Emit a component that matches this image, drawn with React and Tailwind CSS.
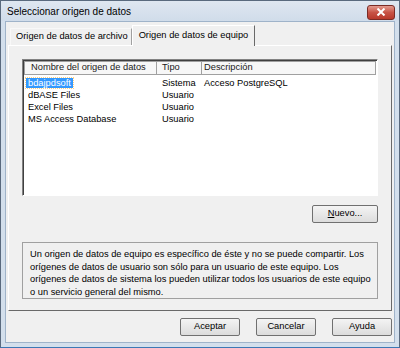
const font = { fontFamily: '"Liberation Sans", Arial, sans-serif' };

const rows = [
  { name: "bdajpdsoft", tipo: "Sistema", desc: "Acceso PostgreSQL", sel: true },
  { name: "dBASE Files", tipo: "Usuario", desc: "" },
  { name: "Excel Files", tipo: "Usuario", desc: "" },
  { name: "MS Access Database", tipo: "Usuario", desc: "" },
];

function Btn({ children, className = "" }) {
  return (
    <div
      className={
        "h-[18px] flex items-center justify-center bg-gradient-to-b from-[#f4f4f4] to-[#dcdcdc] border border-[#707070] rounded-[2px] text-[9.3px] text-black " +
        className
      }
    >
      {children}
    </div>
  );
}

export default function App() {
  return (
    <div
      style={font}
      className="w-[400px] h-[348px] flex flex-col bg-[#d3dfec] border border-[#5a6a7e] border-b-[#3c78b4] overflow-hidden"
    >
      {/* title bar */}
      <div className="h-[21px] flex items-center justify-between pl-[6px] pr-[4px] bg-gradient-to-b from-[#dfe7f1] to-[#d0dcea]">
        <span className="text-[10px] text-black">Seleccionar origen de datos</span>
        <div className="w-[28px] h-[15px] mt-[2px] rounded-[3px] border border-[#7a2b25] bg-gradient-to-b from-[#e39a8f] via-[#c75346] to-[#b8382a] flex items-center justify-center">
          <svg width="10" height="8" viewBox="0 0 10 8">
            <path d="M1.5 0.5 L8.5 7.5 M8.5 0.5 L1.5 7.5" stroke="#ffffff" strokeWidth="2" />
          </svg>
        </div>
      </div>

      {/* body */}
      <div className="flex-1 mx-[4px] mb-[4px] bg-[#f0f0f0] border border-[#9fb3c9] flex flex-col px-[2px] pt-[2px] pb-[6px]">
        {/* tabs */}
        <div className="flex items-end pl-[2px] h-[21px] relative z-10">
          <div className="h-[17px] pl-[5px] pr-[3px] flex items-center bg-[#f0f0f0] border border-b-0 border-[#f8f8f8] border-r-[#a0a0a0] text-[9.3px] text-black">
            Origen de datos de archivo
          </div>
          <div className="h-[21px] -mb-px pl-[6px] pr-[6px] flex items-center bg-[#f0f0f0] border border-b-0 border-white border-r-[#696969] text-[9.3px] text-black">
            Origen de datos de equipo
          </div>
        </div>

        {/* panel */}
        <div className="h-[266px] border border-white border-r-[#696969] border-b-[#696969] px-[13px] pt-[13px] flex flex-col">
          {/* list */}
          <div className="h-[137px] bg-white border border-[#828282] border-b-white border-r-white shadow-[inset_1px_1px_0_#404040]">
            <div className="flex h-[14px] ml-[1px] mt-[1px] w-[352px] text-[9.3px] text-[#1a1a1a] bg-[#f7f7f7] border border-[#a0a0a0]">
              <div className="w-[132px] pl-[6px] border-r border-[#a0a0a0] flex items-center">
                Nombre del origen de datos
              </div>
              <div className="w-[45px] pl-[5px] border-r border-[#a0a0a0] flex items-center">Tipo</div>
              <div className="flex-1 pl-[2px] flex items-center">Descripción</div>
            </div>
            <div className="pt-[3px] text-[9.3px] text-black">
              {rows.map((r) => (
                <div key={r.name} className="flex h-[12px] items-center">
                  <div className="w-[133px] pl-[3px]">
                    {r.sel ? (
                      <span className="bg-[#3399ff] text-white px-[2px] outline outline-1 outline-dotted outline-[#ffcf80]">
                        {r.name}
                      </span>
                    ) : (
                      <span className="px-[2px]">{r.name}</span>
                    )}
                  </div>
                  <div className="w-[45px] pl-[6px]">{r.tipo}</div>
                  <div className="flex-1 pl-[3px]">{r.desc}</div>
                </div>
              ))}
            </div>
          </div>

          <div className="flex justify-end mt-[9px]">
            <Btn className="w-[66px]">
              <span>
                <span className="underline">N</span>uevo...
              </span>
            </Btn>
          </div>

          <div className="mt-[19px] h-[57px] border border-[#a0a0a0] px-[7px] pt-[5px] text-[9.3px] leading-[12.6px] text-black whitespace-nowrap">
            Un origen de datos de equipo es específico de éste y no se puede compartir. Los
            <br />
            orígenes de datos de usuario son sólo para un usuario de este equipo. Los
            <br />
            orígenes de datos de sistema los pueden utilizar todos los usuarios de este equipo
            <br />o un servicio general del mismo.
          </div>
        </div>

        {/* buttons */}
        <div className="flex justify-end gap-[16px] mt-[7px]">
          <Btn className="w-[60px]">Aceptar</Btn>
          <Btn className="w-[60px]">Cancelar</Btn>
          <Btn className="w-[60px]">Ayuda</Btn>
        </div>
      </div>
    </div>
  );
}
